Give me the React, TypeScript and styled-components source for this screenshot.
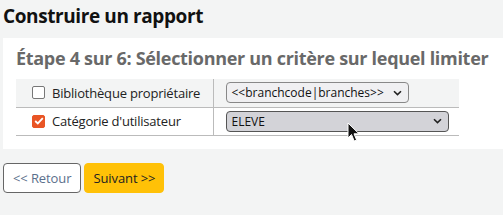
import React from "react";
import styled, { createGlobalStyle } from "styled-components";

const Global = createGlobalStyle`
  html, body { margin: 0; padding: 0; background: #f3f4f4; }
  body { font-family: "Open Sans", "Noto Sans", sans-serif; color: #111; }
  * { box-sizing: border-box; }
`;

const Page = styled.div`
  position: relative;
  width: 503px;
  height: 215px;
  overflow: hidden;
  padding: 0 0 0 3px;
`;

const Heading = styled.h1`
  margin: 0;
  height: 38px;
  padding-top: 4px;
  font-size: 19px;
  font-weight: 700;
  line-height: 24px;
  letter-spacing: -0.4px;
  color: #111;
`;

const Panel = styled.section`
  background: #fff;
  padding: 8px 0 13px 13px;
  width: 520px;
`;

const StepTitle = styled.h2`
  margin: 0 0 9px 0;
  font-size: 18px;
  line-height: 24px;
  font-weight: 700;
  color: #696969;
  letter-spacing: -0.3px;
  white-space: nowrap;
`;

const Table = styled.table`
  border-collapse: collapse;
  table-layout: fixed;
  width: 443px;
  font-size: 13px;
`;

const Row = styled.tr<{ $striped?: boolean }>`
  background: ${(p) => (p.$striped ? "#f3f4f4" : "#fff")};
  border-bottom: 1px solid #bbb;
  height: 28px;
`;

const LabelCell = styled.td`
  width: 197px;
  padding: 0 0 0 16px;
  border-right: 1px solid #bbb;
  vertical-align: middle;
`;

const SelectCell = styled.td`
  padding: 0 0 0 12px;
  vertical-align: middle;
`;

const Label = styled.label`
  display: flex;
  align-items: center;
  gap: 7px;
  color: #222;
  white-space: nowrap;
  letter-spacing: -0.2px;
`;

const Box = styled.span<{ $checked?: boolean }>`
  width: 13px;
  height: 13px;
  border-radius: 2px;
  display: inline-flex;
  align-items: center;
  justify-content: center;
  background: ${(p) => (p.$checked ? "#e95525" : "#fff")};
  border: 1px solid ${(p) => (p.$checked ? "#e95525" : "#777")};
  flex: none;
`;

const Select = styled.div<{ $width: number; $hover?: boolean }>`
  width: ${(p) => p.$width}px;
  height: 21px;
  display: flex;
  align-items: center;
  justify-content: space-between;
  padding: 0 6px 0 5px;
  border-radius: 4px;
  border: 1px solid ${(p) => (p.$hover ? "#555" : "#888")};
  background: ${(p) => (p.$hover ? "#d3d3d8" : "#f0f0f2")};
  font-family: "Open Sans", "Noto Sans", sans-serif;
  font-size: 12px;
  color: #111;
  white-space: nowrap;
`;

const Chevron = () => (
  <svg width="9" height="6" viewBox="0 0 9 6">
    <path d="M1 1.2 L4.5 4.6 L8 1.2" fill="none" stroke="#222" strokeWidth="1.6" />
  </svg>
);

const Buttons = styled.div`
  display: flex;
  gap: 3px;
  margin-top: 14px;
`;

const Button = styled.button<{ $primary?: boolean }>`
  height: 30px;
  padding: 0 ${(p) => (p.$primary ? 8 : 9)}px;
  border-radius: 4px;
  font-family: inherit;
  font-size: 13px;
  letter-spacing: -0.1px;
  cursor: pointer;
  border: 1px solid ${(p) => (p.$primary ? "#ffc107" : "#666")};
  background: ${(p) => (p.$primary ? "#ffc107" : "#fff")};
  color: ${(p) => (p.$primary ? "#222" : "#5b6f8c")};
`;

const Cursor = styled.svg`
  position: absolute;
  left: 347px;
  top: 122px;
`;

export default function App() {
  return (
    <Page>
      <Global />
      <Heading>Construire un rapport</Heading>
      <Panel>
        <StepTitle>Étape 4 sur 6: Sélectionner un critère sur lequel limiter</StepTitle>
        <Table>
          <tbody>
            <Row $striped>
              <LabelCell>
                <Label>
                  <Box />
                  Bibliothèque propriétaire
                </Label>
              </LabelCell>
              <SelectCell>
                <Select $width={183}>
                  <span>&lt;&lt;branchcode|branches&gt;&gt;</span>
                  <Chevron />
                </Select>
              </SelectCell>
            </Row>
            <Row>
              <LabelCell>
                <Label>
                  <Box $checked>
                    <svg width="10" height="8" viewBox="0 0 10 8">
                      <path d="M1.2 4 L3.8 6.4 L8.8 1.2" fill="none" stroke="#fff" strokeWidth="1.8" />
                    </svg>
                  </Box>
                  Catégorie d'utilisateur
                </Label>
              </LabelCell>
              <SelectCell>
                <Select $width={223} $hover>
                  <span>ELEVE</span>
                  <Chevron />
                </Select>
              </SelectCell>
            </Row>
          </tbody>
        </Table>
      </Panel>
      <Buttons>
        <Button>&lt;&lt; Retour</Button>
        <Button $primary>Suivant &gt;&gt;</Button>
      </Buttons>
      <Cursor width="14" height="22" viewBox="0 0 14 22">
        <path d="M1 1 L1 16 L4.5 12.5 L7.2 19 L9.6 18 L7 11.8 L12 11.8 Z" fill="#111" stroke="#fff" strokeWidth="1" />
      </Cursor>
    </Page>
  );
}
